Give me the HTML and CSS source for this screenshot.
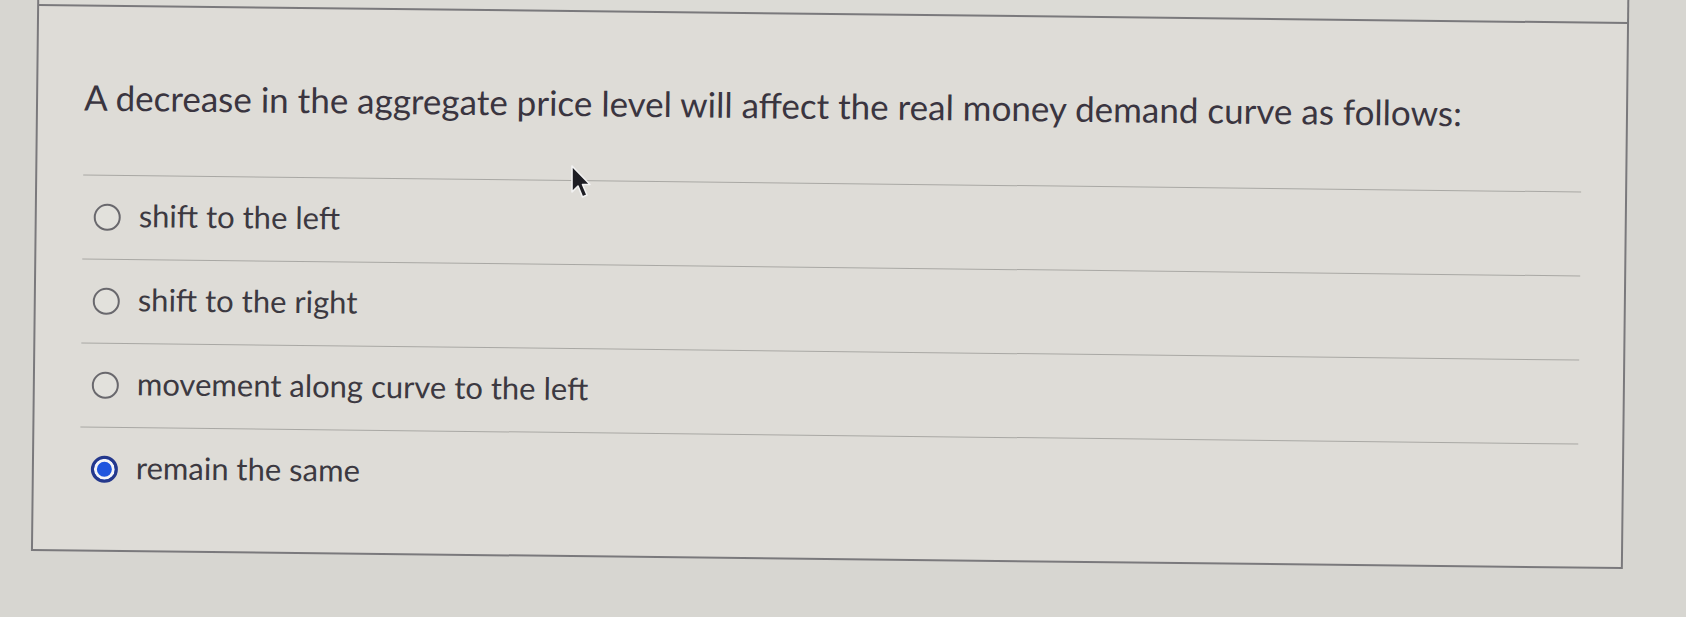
FILE: index.html
```html
<!DOCTYPE html>
<html lang="en">
<head>
<meta charset="utf-8">
<title>Question</title>
<link rel="stylesheet" href="styles.css">
</head>
<body>
<div class="page">
  <div class="stack">
    <div class="prev"></div>
    <div class="card">
      <p class="question">A decrease in the aggregate price level will affect the real money demand curve as follows:</p>
      <ul class="options">
        <li class="option"><span class="radio"></span><span class="label">shift to the left</span></li>
        <li class="option"><span class="radio"></span><span class="label">shift to the right</span></li>
        <li class="option"><span class="radio"></span><span class="label">movement along curve to the left</span></li>
        <li class="option"><span class="radio checked"></span><span class="label">remain the same</span></li>
      </ul>
    </div>
  </div>
</div>
<svg class="cursor" width="22" height="36" viewBox="0 0 22 36" aria-hidden="true">
  <path d="M2 2 L2 28 L8 22 L12.5 33 L17 31 L12.5 20.5 L20 20.5 Z" fill="#1e1e24" stroke="#f2f2f2" stroke-width="1.6" stroke-linejoin="round"/>
</svg>
</body>
</html>
```
FILE: styles.css
```css
html, body {
  margin: 0;
  padding: 0;
}
body {
  background: #d7d6d1;
  font-family: Lato, "Open Sans", "Liberation Sans", sans-serif;
  color: #3b3740;
  width: 1686px;
  height: 617px;
  overflow: hidden;
  position: relative;
}
.page {
  display: flow-root;
  padding: 0 0 0 34px;
}
.stack {
  width: 1592px;
  margin-top: -17px;
  transform: rotate(0.65deg);
  transform-origin: 50% 303.5px;
}
.prev {
  box-sizing: border-box;
  height: 30px;
  border-left: 2px solid #7a797c;
  border-right: 2px solid #7a797c;
  background: #dcdbd6;
}
.card {
  box-sizing: border-box;
  width: 1592px;
  height: 547px;
  border: 2px solid #7a797c;
  background: #dedcd7;
  padding: 0 44px 0 46px;
}
.question {
  margin: 69px 0 0 0;
  font-size: 35px;
  line-height: 42px;
  color: #3a3540;
}
.options {
  list-style: none;
  margin: 57px 0 0 0;
  padding: 0;
}
.option {
  height: 84px;
  border-top: 1.5px solid #a9a8a4;
  display: flex;
  align-items: center;
  gap: 18px;
  padding-left: 11px;
  font-size: 31px;
  box-sizing: border-box;
}
.radio {
  width: 27px;
  height: 27px;
  box-sizing: border-box;
  border: 2px solid #69686d;
  border-radius: 50%;
  flex: none;
  background: #e2e1dc;
}
.radio.checked {
  border: 3px solid #24388c;
  background: #1f55de;
  box-shadow: inset 0 0 0 3px #f4f4f7;
}
.label {
  color: #3c3941;
  padding-bottom: 6px;
}
.cursor {
  position: absolute;
  left: 570px;
  top: 164px;
}
```
